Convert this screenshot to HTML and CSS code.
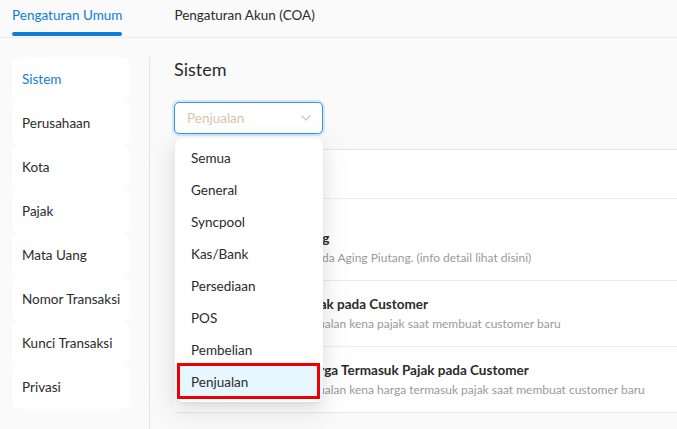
FILE: index.html
```html
<!DOCTYPE html>
<html>
<head>
<meta charset="utf-8">
<link rel="stylesheet" href="styles.css">
</head>
<body>
<div class="tabs">
  <div class="tab active"><span>Pengaturan Umum</span><i class="ink"></i></div>
  <div class="tab"><span>Pengaturan Akun (COA)</span></div>
</div>
<div class="main">
  <ul class="side">
    <li class="on">Sistem</li>
    <li>Perusahaan</li>
    <li>Kota</li>
    <li>Pajak</li>
    <li>Mata Uang</li>
    <li>Nomor Transaksi</li>
    <li>Kunci Transaksi</li>
    <li>Privasi</li>
  </ul>
  <div class="content">
    <h1 class="title">Sistem</h1>
    <div class="select-wrap">
      <div class="select">
        <span class="ph">Penjualan</span>
        <svg class="chev" width="10" height="6" viewBox="0 0 10 6"><path d="M0.5 0.5 L5 5 L9.5 0.5" fill="none" stroke="#d8bfa4" stroke-width="1.1"/></svg>
      </div>
      <ul class="menu">
        <li>Semua</li>
        <li>General</li>
        <li>Syncpool</li>
        <li>Kas/Bank</li>
        <li>Persediaan</li>
        <li>POS</li>
        <li>Pembelian</li>
        <li class="sel">Penjualan</li>
      </ul>
    </div>
    <div class="panel">
      <div class="row head"></div>
      <div class="row first">
        <span class="sw"></span>
        <div class="txt">
          <div class="rt">Kolom Aging</div>
          <div class="rd">Atur umur pada Aging Piutang. (info detail lihat disini)</div>
        </div>
      </div>
      <div class="row">
        <span class="sw"></span>
        <div class="txt">
          <div class="rt">Default Pajak pada Customer</div>
          <div class="rd">Default penjualan kena pajak saat membuat customer baru</div>
        </div>
      </div>
      <div class="row">
        <span class="sw"></span>
        <div class="txt">
          <div class="rt">Standar Harga Termasuk Pajak pada Customer</div>
          <div class="rd">Default penjualan kena harga termasuk pajak saat membuat customer baru</div>
        </div>
      </div>
    </div>
  </div>
</div>
</body>
</html>
```

FILE: styles.css
```css
* { box-sizing: border-box; }
html, body { margin: 0; padding: 0; }
body {
  background: #fafafa;
  font-family: Lato, "Noto Sans", sans-serif;
  font-size: 13.5px;
  color: #333;
  width: 677px;
  height: 429px;
  overflow: hidden;
}
.tabs {
  display: flex;
  gap: 52px;
  padding-left: 12px;
  height: 38px;
  border-bottom: 1px solid #ececec;
}
.tab {
  display: flex;
  flex-direction: column;
  padding-top: 6px;
  color: #2b2b2b;
}
.tab span { line-height: 18px; display: block; }
.tab.active { color: #0c7ed8; }
.ink {
  display: block;
  margin-top: 8px;
  height: 4px;
  border-radius: 3px;
  background: #0c7ed8;
}
.main {
  display: flex;
  padding-top: 19px;
  height: 391px;
}
.side {
  list-style: none;
  margin: 0 19px 0 12px;
  padding: 0;
  width: 118px;
}
.side li {
  height: 44px;
  line-height: 44px;
  padding-left: 10px;
  background: #fff;
  border-radius: 8px;
  color: #2b2b2b;
}
.side li.on { color: #0c7ed8; }
.content {
  flex: 1;
  border-left: 1px solid #e3e3e3;
  padding-left: 24px;
}
.title {
  margin: 0;
  font-size: 18px;
  font-weight: 400;
  line-height: 24px;
  color: #2b2b2b;
}
.select-wrap {
  position: relative;
  width: 149px;
  margin-top: 21px;
  z-index: 2;
}
.select {
  height: 32px;
  border: 1.5px solid #3f93e6;
  border-radius: 5px;
  background: #fff;
  box-shadow: 0 0 0 2px rgba(24, 144, 255, 0.18);
  display: flex;
  align-items: center;
  justify-content: space-between;
  padding: 0 11px 0 12px;
}
.ph { color: #d9c4ad; }
.chev { display: block; }
.menu {
  position: absolute;
  top: 36px;
  left: 1px;
  width: 148px;
  margin: 0;
  padding: 4px 0;
  list-style: none;
  background: #fff;
  border-radius: 8px;
  box-shadow: 0 3px 6px -4px rgba(0,0,0,.12), 0 6px 16px 0 rgba(0,0,0,.08), 0 9px 28px 8px rgba(0,0,0,.05);
}
.menu li {
  height: 32px;
  line-height: 32px;
  padding-left: 16px;
  color: #2b2b2b;
  position: relative;
}
.menu li.sel { background: #e6f7ff; }
.menu li.sel::after {
  content: "";
  position: absolute;
  top: -3px;
  left: 2px;
  right: 3px;
  bottom: -1px;
  border: 3px solid #ee0000;
}
.panel {
  margin-top: 15px;
  background: #fff;
  border-top: 1px solid #e6e6e6;
}
.row {
  display: flex;
  border-bottom: 1px solid #ececec;
  padding: 13px 16px 12px 16px;
  height: 66px;
}
.row.head { height: 49px; }
.row.first { height: 82px; padding-top: 29px; }
.sw {
  flex: none;
  width: 40px;
  height: 20px;
  border-radius: 10px;
  background: #1890ff;
  margin: 10px 23px 0 0;
}
.rt {
  font-weight: 700;
  line-height: 20px;
  color: #2b2b2b;
}
.rd {
  font-size: 12px;
  line-height: 20px;
  color: #9a9a9a;
}
```
